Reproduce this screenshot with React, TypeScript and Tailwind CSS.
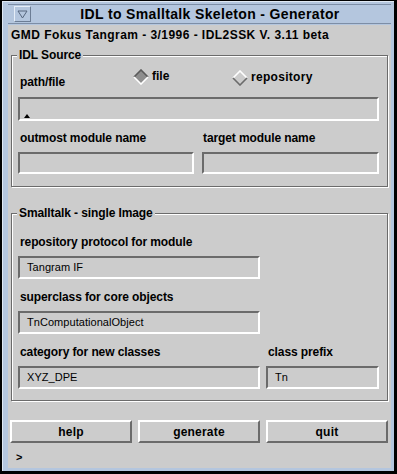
import React from "react";

const font = { fontFamily: '"Liberation Sans", Arial, sans-serif' };

function Field({ w, h, value, caret }: { w: string; h: string; value?: string; caret?: boolean }) {
  return (
    <div
      className={`${w} ${h} flex items-center border-2 border-t-[#6b6b6b] border-l-[#6b6b6b] border-b-white border-r-white bg-[#cccccc] pl-[7px]`}
    >
      {caret ? (
        <div className="self-end mb-[1px] -ml-[3px] w-0 h-0 border-l-[3px] border-r-[3px] border-b-[4px] border-l-transparent border-r-transparent border-b-black" />
      ) : null}
      {value ? <span className="text-[11px] tracking-[0.05px] text-black leading-none">{value}</span> : null}
    </div>
  );
}

function Label({ children, className = "" }: { children: React.ReactNode; className?: string }) {
  return (
    <div className={`text-[12px] leading-[14px] font-bold tracking-[-0.1px] text-black ${className}`}>{children}</div>
  );
}

function Group({ title, children, className = "" }: { title: string; children: React.ReactNode; className?: string }) {
  return (
    <div
      className={`relative border border-[#6b6b6b] shadow-[inset_1px_1px_0_#ffffff,1px_1px_0_#ffffff] ${className}`}
    >
      <span className="absolute -top-[8px] left-[5px] bg-[#cccccc] px-[2px] text-[12px] leading-[14px] font-bold tracking-[-0.1px] text-black">
        {title}
      </span>
      {children}
    </div>
  );
}

function Diamond({ selected }: { selected: boolean }) {
  return (
    <svg width="16" height="16" viewBox="0 0 16 16">
      <polygon points="8,1 15,8 8,15 1,8" fill={selected ? "#8e8e8e" : "#cccccc"} />
      <polyline
        points="1,8 8,1 15,8"
        fill="none"
        stroke={selected ? "#5a5a5a" : "#ffffff"}
        strokeWidth="1.6"
      />
      <polyline
        points="15,8 8,15 1,8"
        fill="none"
        stroke={selected ? "#ffffff" : "#6b6b6b"}
        strokeWidth="1.6"
      />
    </svg>
  );
}

function Button({ label }: { label: string }) {
  return (
    <div className="w-[122px] h-[23px] flex items-center justify-center border-2 border-t-white border-l-white border-b-[#6b6b6b] border-r-[#6b6b6b] bg-[#cccccc]">
      <span className="text-[12px] font-bold tracking-[0.2px] text-black leading-none">{label}</span>
    </div>
  );
}

export default function App() {
  return (
    <div className="w-[397px] h-[474px] bg-black overflow-hidden relative" style={font}>
      <div className="ml-[2px] mt-[1px] w-[392px] h-[470px] bg-[#b4c6de] pt-[2px] pl-[5px] pr-[3px] pb-[3px] flex flex-col border-l border-t border-[#dfe8f3]">
        {/* title bar */}
        <div className="h-[20px] flex items-center border-t border-b border-[#7d8ea6] relative">
          <div className="ml-[6px] w-[17px] h-[16px] flex items-center justify-center border border-t-[#e6eef8] border-l-[#e6eef8] border-b-[#6c7d95] border-r-[#6c7d95]">
            <svg width="11" height="9" viewBox="0 0 11 9">
              <polygon points="1,1 10,1 5.5,8" fill="none" stroke="#56667e" strokeWidth="1" />
            </svg>
          </div>
          <div className="flex-1 text-center text-[14px] font-bold tracking-[0.35px] text-black leading-none pr-[2px]">
            IDL to Smalltalk Skeleton - Generator
          </div>
        </div>
        {/* body */}
        <div className="mt-[1px] flex-1 bg-[#cccccc] flex flex-col">
          <div className="pt-[3px] pl-[3px] text-[12px] leading-[14px] font-bold tracking-[0.45px] text-black">
            GMD Fokus Tangram - 3/1996 - IDL2SSK V. 3.11 beta
          </div>

          <Group title="IDL Source" className="ml-[3px] mt-[13px] w-[377px] pb-[12px]">
            <div className="mt-[14px] flex items-start">
              <Label className="ml-[8px] mt-[5px] w-[113px]">path/file</Label>
              <div className="w-[99px] flex items-center gap-[3px] -mt-[1px]">
                <Diamond selected />
                <span className="text-[12px] font-bold text-black leading-none -mt-[2px]">file</span>
              </div>
              <div className="flex items-center gap-[3px]">
                <Diamond selected={false} />
                <span className="text-[12px] font-bold tracking-[0.3px] text-black leading-none -mt-[2px]">repository</span>
              </div>
            </div>
            <div className="mt-[8px] ml-[6px]">
              <Field w="w-[361px]" h="h-[24px]" caret />
            </div>
            <div className="mt-[10px] flex">
              <Label className="ml-[8px] w-[183px]">outmost module name</Label>
              <Label>target module name</Label>
            </div>
            <div className="mt-[7px] ml-[6px] flex gap-[8px]">
              <Field w="w-[176px]" h="h-[22px]" />
              <Field w="w-[177px]" h="h-[22px]" />
            </div>
          </Group>

          <Group title="Smalltalk - single Image" className="ml-[3px] mt-[26px] w-[377px] pb-[11px]">
            <Label className="mt-[21px] ml-[8px]">repository protocol for module</Label>
            <div className="mt-[7px] ml-[6px]">
              <Field w="w-[242px]" h="h-[23px]" value="Tangram IF" />
            </div>
            <Label className="mt-[11px] ml-[8px]">superclass for core objects</Label>
            <div className="mt-[7px] ml-[6px]">
              <Field w="w-[242px]" h="h-[23px]" value="TnComputationalObject" />
            </div>
            <div className="mt-[11px] flex">
              <Label className="ml-[8px] w-[248px]">category for new classes</Label>
              <Label>class prefix</Label>
            </div>
            <div className="mt-[7px] ml-[6px] flex gap-[6px]">
              <Field w="w-[242px]" h="h-[23px]" value="XYZ_DPE" />
              <Field w="w-[113px]" h="h-[23px]" value="Tn" />
            </div>
          </Group>

          <div className="mt-[19px] ml-[2px] flex gap-[6px]">
            <Button label="help" />
            <Button label="generate" />
            <Button label="quit" />
          </div>
          <div className="mt-[7px] ml-[8px] text-[11px] leading-[14px] font-bold text-black">&gt;</div>
        </div>
      </div>
    </div>
  );
}
